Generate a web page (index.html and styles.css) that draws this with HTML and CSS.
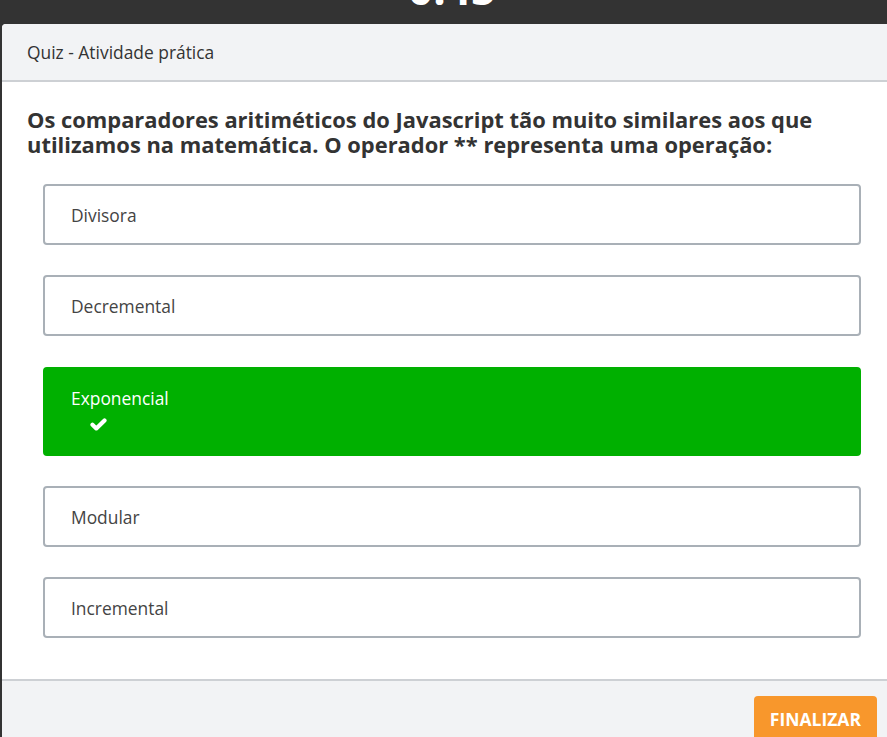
FILE: index.html
```html
<!DOCTYPE html>
<html lang="pt-BR">
<head>
<meta charset="utf-8">
<title>Quiz - Atividade prática</title>
<link rel="stylesheet" href="styles.css">
</head>
<body>
<div class="page">
  <div class="timer-bar"><span class="timer">0:45</span></div>
  <div class="modal">
    <div class="modal-header">Quiz - Atividade prática</div>
    <div class="modal-body">
      <h2 class="question">Os comparadores aritiméticos do Javascript tão muito similares aos que utilizamos na matemática. O operador ** representa uma operação:</h2>
      <div class="options">
        <div class="option">Divisora</div>
        <div class="option">Decremental</div>
        <div class="option option-correct">
          <span>Exponencial</span>
          <span class="check"><svg width="17" height="13" viewBox="0 0 17 13"><path d="M2.5 6.8 L6.3 10.4 L14.5 2.4" fill="none" stroke="#fff" stroke-width="4.2" stroke-linecap="round" stroke-linejoin="round"/></svg></span>
        </div>
        <div class="option">Modular</div>
        <div class="option">Incremental</div>
      </div>
    </div>
    <div class="modal-footer">
      <button class="btn-finish">FINALIZAR</button>
    </div>
  </div>
</div>
</body>
</html>
```
FILE: styles.css
```css
html, body {
  margin: 0;
  padding: 0;
  background: #333333;
  overflow: hidden;
  height: 100%;
}
body {
  font-family: "Open Sans", "Liberation Sans", sans-serif;
  color: #333;
}
.page {
  width: 900px;
  margin-left: 2px;
}
.timer-bar {
  height: 24px;
  overflow: hidden;
  text-align: center;
}
.timer {
  display: block;
  font-size: 44px;
  line-height: 44px;
  font-weight: 700;
  color: #fff;
  margin-top: -34px;
}
.modal {
  background: #fff;
  border-radius: 4px 4px 0 0;
  overflow: hidden;
}
.modal-header {
  background: #f2f3f5;
  height: 56px;
  border-bottom: 2px solid #cdd0d4;
  padding: 0 25px;
  display: flex;
  align-items: center;
  font-size: 17.4px;
  color: #333;
}
.modal-body {
  padding: 25px 25px 41px;
}
.question {
  margin: 0 0 27px 0;
  font-size: 21.9px;
  line-height: 25px;
  font-weight: 700;
  color: #333;
}
.options {
  margin: 0 16px;
  display: flex;
  flex-direction: column;
  gap: 30.25px;
}
.option {
  border: 2px solid #a9b0b7;
  border-radius: 4px;
  padding: 18px 26px 16px;
  font-size: 17.4px;
  line-height: 23px;
  color: #444;
}
.option-correct {
  background: #00b000;
  border-color: #00b000;
  color: #fff;
  padding-bottom: 15px;
  display: flex;
  flex-direction: column;
  align-items: flex-start;
}
.check {
  display: flex;
  align-items: center;
  height: 29px;
  padding-top: 1px;
  box-sizing: border-box;
  margin-left: 19px;
}
.modal-footer {
  background: #f2f3f5;
  border-top: 2px solid #cdd0d4;
  padding: 15px 25px 20px;
  display: flex;
  justify-content: flex-end;
}
.btn-finish {
  background: #f8972c;
  color: #fff;
  border: none;
  border-radius: 4px;
  font-family: "Open Sans", "Liberation Sans", sans-serif;
  font-weight: 700;
  font-size: 17.5px;
  line-height: 22px;
  padding: 12px 16px;
}
```
